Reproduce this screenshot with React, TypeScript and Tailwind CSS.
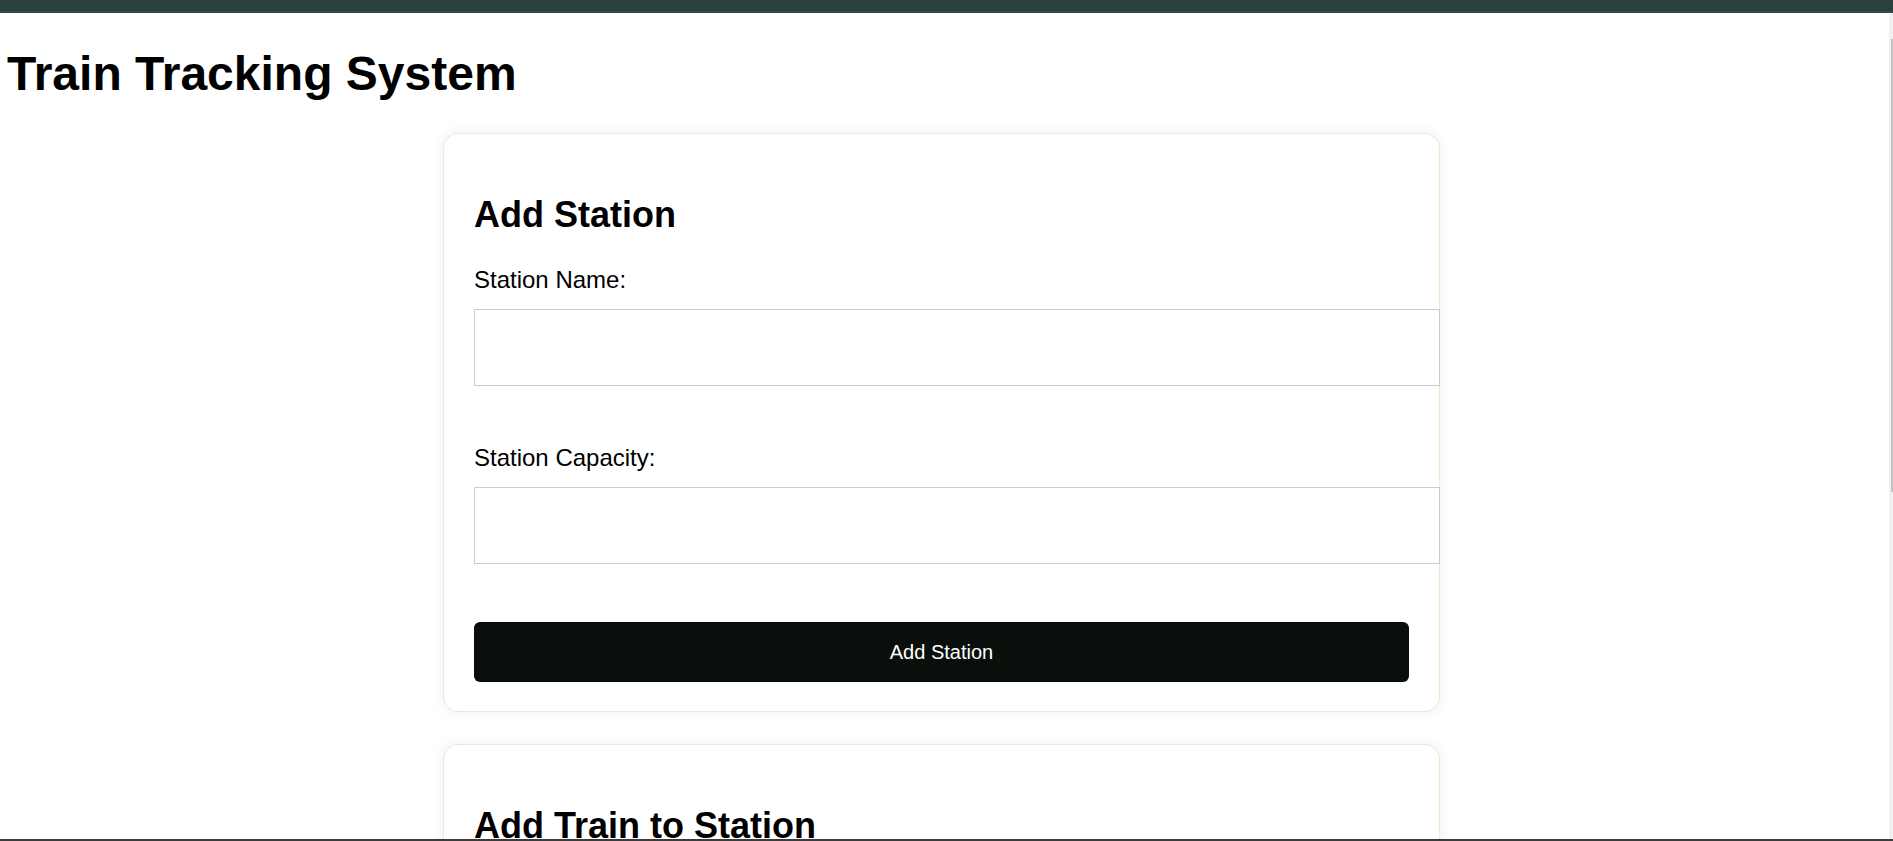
import React from "react";

const font = { fontFamily: '"Liberation Sans", Arial, sans-serif' };

function Field({ label, mt }: { label: string; mt: string }) {
  return (
    <div className={`flex flex-col ${mt}`}>
      <label className="text-[24px] leading-[28px] text-black">{label}</label>
      <input
        type="text"
        className="mt-[15px] h-[77px] w-[966px] border border-[#cccccc] bg-white px-[15px] text-[20px] outline-none"
      />
    </div>
  );
}

export default function App() {
  return (
    <div className="flex h-[841px] w-[1893px] flex-col overflow-hidden bg-white" style={font}>
      <div className="h-[13px] shrink-0 border-b-2 border-[#344a46] bg-[#29403c]" />
      <div className="flex min-h-0 flex-1">
        <main className="min-w-0 flex-1 overflow-hidden">
          <h1 className="mt-[33px] pl-[7px] text-[48px] font-bold leading-[55px] text-black">
            Train Tracking System
          </h1>

          <section className="ml-[443px] mt-[32px] w-[997px] rounded-[15px] border border-[#e9edcc] bg-white pb-[29px] pl-[30px] pr-[30px] pt-[60px] shadow-[0_0_14px_rgba(0,0,0,0.07)]">
            <h2 className="text-[36px] font-bold leading-[42px] text-black">Add Station</h2>
            <Field label="Station Name:" mt="mt-[30px]" />
            <Field label="Station Capacity:" mt="mt-[58px]" />
            <button
              type="button"
              className="mt-[58px] h-[60px] w-full rounded-[6px] bg-[#0b0f0c] text-[20px] text-white"
            >
              Add Station
            </button>
          </section>

          <section className="ml-[443px] mt-[32px] w-[997px] rounded-[15px] border border-[#e9edcc] bg-white pb-[29px] pl-[30px] pr-[30px] pt-[60px] shadow-[0_0_14px_rgba(0,0,0,0.07)]">
            <h2 className="text-[36px] font-bold leading-[42px] text-black">Add Train to Station</h2>
            <Field label="Train Name:" mt="mt-[30px]" />
          </section>
        </main>
        <div className="flex w-[4px] shrink-0 justify-end bg-[#f0f0f0] pt-[26px]">
          <div className="h-[453px] w-[2.5px] bg-[#c1c1c1]" />
        </div>
      </div>
      <div className="h-[2px] shrink-0 bg-[#3c3c3c]" />
    </div>
  );
}
